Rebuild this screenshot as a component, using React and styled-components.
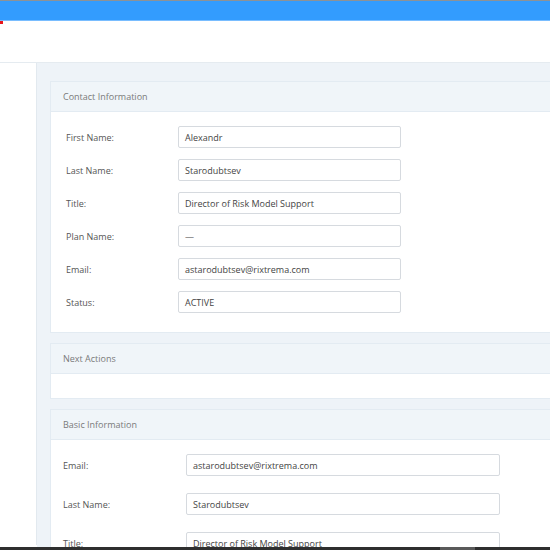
import React from 'react'
import styled, { createGlobalStyle } from 'styled-components'

const GlobalStyle = createGlobalStyle`
  html, body {
    margin: 0;
    padding: 0;
    height: 100%;
    overflow: hidden;
  }
  body {
    font-family: "Open Sans", "Noto Sans", sans-serif;
    background: #fff;
  }
  #root {
    height: 100%;
  }
`

const Page = styled.div`
  height: 100vh;
  display: flex;
  flex-direction: column;
`

const TopBar = styled.div`
  height: 19px;
  flex: none;
  background: #339cfe;
  border-top: 1px solid #8d9296;
  border-bottom: 1px solid #79bdff;
`

const Header = styled.div`
  height: 41px;
  flex: none;
  background: #fff;
  border-bottom: 1px solid #e5ebf0;
`

const RedMark = styled.div`
  width: 3px;
  height: 3px;
  background: #e8141b;
`

const Body = styled.div`
  flex: 1;
  min-height: 0;
  display: flex;
  overflow: hidden;
`

const Sidebar = styled.div`
  width: 36px;
  flex: none;
  background: #fff;
  border-right: 1px solid #e2e9ef;
  margin-bottom: 2px;
`

const Main = styled.div`
  flex: 1;
  min-width: 0;
  background: #eef3f8;
  padding: 18px 0 0 13px;
  overflow: hidden;
`

const Card = styled.section`
  width: 540px;
  background: #fff;
  border: 1px solid #e3ebf2;
  border-right: none;
  margin-bottom: 10px;
`

const CardHeader = styled.div`
  height: 29px;
  display: flex;
  align-items: center;
  padding-left: 12px;
  background: #f0f5f9;
  border-bottom: 1px solid #e3ebf2;
  color: #7a7a7a;
  font-size: 9px;
`

const CardBody = styled.div`
  padding: ${p => p.$pad || '0'};
  min-height: ${p => p.$minH || 0}px;
  display: flex;
  flex-direction: column;
  gap: ${p => p.$gap || 11}px;
`

const Row = styled.div`
  display: flex;
  align-items: center;
`

const Label = styled.div`
  width: ${p => p.$w}px;
  flex: none;
  color: #555;
  font-size: 9px;
`

const Field = styled.div`
  width: ${p => p.$w}px;
  height: 22px;
  box-sizing: border-box;
  border: 1px solid #d6dadf;
  border-radius: 2px;
  display: flex;
  align-items: center;
  padding-left: 6px;
  color: #444;
  font-size: 9px;
  white-space: nowrap;
`

const BottomBar = styled.div`
  height: 3px;
  flex: none;
  background: #2f2f2f;
  display: flex;
  padding-left: 440px;
`

const ScrollThumb = styled.div`
  width: 35px;
  background: #5a5a5a;
`

const contact = [
  ['First Name:', 'Alexandr'],
  ['Last Name:', 'Starodubtsev'],
  ['Title:', 'Director of Risk Model Support'],
  ['Plan Name:', '—'],
  ['Email:', 'astarodubtsev@rixtrema.com'],
  ['Status:', 'ACTIVE'],
]

const basic = [
  ['Email:', 'astarodubtsev@rixtrema.com'],
  ['Last Name:', 'Starodubtsev'],
  ['Title:', 'Director of Risk Model Support'],
]

const App = () => (
  <Page>
    <GlobalStyle />
    <TopBar />
    <Header>
      <RedMark />
    </Header>
    <Body>
      <Sidebar />
      <Main>
        <Card>
          <CardHeader>Contact Information</CardHeader>
          <CardBody $pad="14px 0 19px 15px">
            {contact.map(([l, v]) => (
              <Row key={l}>
                <Label $w={112}>{l}</Label>
                <Field $w={223}>{v}</Field>
              </Row>
            ))}
          </CardBody>
        </Card>
        <Card>
          <CardHeader>Next Actions</CardHeader>
          <CardBody $minH={24} />
        </Card>
        <Card>
          <CardHeader>Basic Information</CardHeader>
          <CardBody $pad="14px 0 19px 12px" $gap={17}>
            {basic.map(([l, v]) => (
              <Row key={l}>
                <Label $w={123}>{l}</Label>
                <Field $w={314}>{v}</Field>
              </Row>
            ))}
          </CardBody>
        </Card>
      </Main>
    </Body>
    <BottomBar>
      <ScrollThumb />
    </BottomBar>
  </Page>
)

export default App
